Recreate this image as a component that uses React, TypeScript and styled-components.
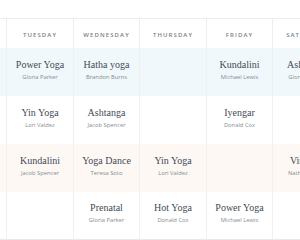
import React from "react";
import styled, { createGlobalStyle } from "styled-components";

const Global = createGlobalStyle`
  html, body { margin: 0; padding: 0; background: #ffffff; }
  body { width: 300px; height: 240px; overflow: hidden; }
`;

type Cls = { title: string; teacher: string } | null;
type Tone = "blue" | "white" | "peach";

const days = ["", "TUESDAY", "WEDNESDAY", "THURSDAY", "FRIDAY", "SATURDAY"];
const widths = [6, 67, 66, 67, 66, 67];

const rows: { tone: Tone; cells: Cls[] }[] = [
  {
    tone: "blue",
    cells: [
      null,
      { title: "Power Yoga", teacher: "Gloria Parker" },
      { title: "Hatha yoga", teacher: "Brandon Burns" },
      null,
      { title: "Kundalini", teacher: "Michael Lewis" },
      { title: "Ashtanga", teacher: "Gloria Parker" },
    ],
  },
  {
    tone: "white",
    cells: [
      null,
      { title: "Yin Yoga", teacher: "Lori Valdez" },
      { title: "Ashtanga", teacher: "Jacob Spencer" },
      null,
      { title: "Iyengar", teacher: "Donald Cox" },
      null,
    ],
  },
  {
    tone: "peach",
    cells: [
      null,
      { title: "Kundalini", teacher: "Jacob Spencer" },
      { title: "Yoga Dance", teacher: "Teresa Soto" },
      { title: "Yin Yoga", teacher: "Lori Valdez" },
      null,
      { title: "Vinyasa", teacher: "Nathan Ward" },
    ],
  },
  {
    tone: "white",
    cells: [
      null,
      null,
      { title: "Prenatal", teacher: "Gloria Parker" },
      { title: "Hot Yoga", teacher: "Donald Cox" },
      { title: "Power Yoga", teacher: "Michael Lewis" },
      null,
    ],
  },
];

const toneBg: Record<Tone, string> = { blue: "#f1f8fc", white: "#ffffff", peach: "#fdf8f4" };

const Page = styled.div`
  padding-top: 18px;
  width: 300px;
  height: 240px;
  box-sizing: border-box;
  overflow: hidden;
`;

const Table = styled.div`
  display: grid;
  grid-template-columns: ${widths.map((w) => `${w}px`).join(" ")};
  width: 339px;
  border-top: 1px solid #e9eef0;
`;

const HeadCell = styled.div<{ $first?: boolean }>`
  height: 29px;
  box-sizing: border-box;
  border-left: ${(p) => (p.$first ? "none" : "1px solid #eceff1")};
  display: flex;
  align-items: center;
  justify-content: center;
  padding-top: 2px;
  font-family: "Open Sans", "Liberation Sans", sans-serif;
  font-size: 6px;
  font-weight: 600;
  letter-spacing: 1.1px;
  color: #7c8084;
`;

const Cell = styled.div<{ $first?: boolean; $tone: Tone; $last?: boolean }>`
  height: 48px;
  box-sizing: border-box;
  background: ${(p) => toneBg[p.$tone]};
  border-left: ${(p) => (p.$first ? "none" : "1px solid #eef0f2")};
  border-bottom: ${(p) => (p.$last ? "1px solid #e4e9ec" : "none")};
  display: flex;
  flex-direction: column;
  align-items: center;
  justify-content: center;
  padding-bottom: 4px;
`;

const Title = styled.div`
  font-family: "Liberation Serif", "DejaVu Serif", serif;
  font-size: 10px;
  line-height: 12px;
  color: #3f4b57;
  white-space: nowrap;
`;

const Teacher = styled.div`
  margin-top: 2px;
  font-family: "Open Sans", "Liberation Sans", sans-serif;
  font-size: 5.8px;
  line-height: 9px;
  color: #868b90;
  white-space: nowrap;
`;

export default function App() {
  return (
    <>
      <Global />
      <Page>
        <Table>
          {days.map((d, i) => (
            <HeadCell key={i} $first={i === 0}>
              {d}
            </HeadCell>
          ))}
          {rows.map((r, ri) =>
            r.cells.map((c, ci) => (
              <Cell key={`${ri}-${ci}`} $first={ci === 0} $tone={r.tone} $last={ri === rows.length - 1}>
                {c && (
                  <>
                    <Title>{c.title}</Title>
                    <Teacher>{c.teacher}</Teacher>
                  </>
                )}
              </Cell>
            ))
          )}
        </Table>
      </Page>
    </>
  );
}
